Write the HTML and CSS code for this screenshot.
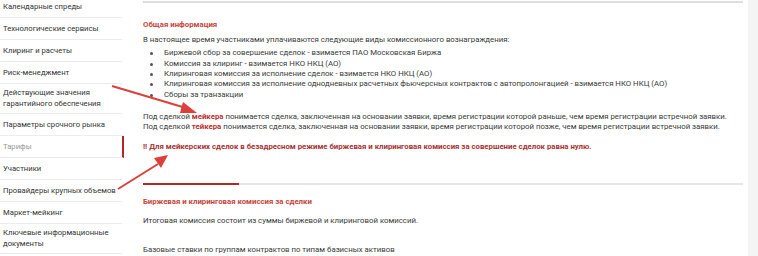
FILE: index.html
```html
<!DOCTYPE html>
<html lang="ru">

<head>
    <meta charset="UTF-8">
    <title>Тарифы</title>
    <link rel="stylesheet" href="styles.css">
</head>

<body>
    <div class="page">
        <!-- Боковое меню -->
        <ul class="side-menu">
            <li class="side-item">Календарные спреды</li>
            <li class="side-item">Технологические сервисы</li>
            <li class="side-item">Клиринг и расчеты</li>
            <li class="side-item">Риск-менеджмент</li>
            <li class="side-item two-line">Действующие значения гарантийного обеспечения</li>
            <li class="side-item">Параметры срочного рынка</li>
            <li class="side-item active">Тарифы</li>
            <li class="side-item">Участники</li>
            <li class="side-item">Провайдеры крупных объемов</li>
            <li class="side-item">Маркет-мейкинг</li>
            <li class="side-item two-line">Ключевые информационные документы</li>
        </ul>

        <!-- Основной текст -->
        <div class="content">
            <div class="top-line"></div>

            <h3 class="block-title">Общая информация</h3>
            <p class="text">В настоящее время участниками уплачиваются следующие виды комиссионного вознаграждения:</p>
            <ul class="fee-list">
                <li>Биржевой сбор за совершение сделок - взимается ПАО Московская Биржа</li>
                <li>Комиссия за клиринг - взимается НКО НКЦ (АО)</li>
                <li>Клиринговая комиссия за исполнение сделок - взимается НКО НКЦ (АО)</li>
                <li>Клиринговая комиссия за исполнение однодневных расчетных фьючерсных контрактов с автопролонгацией - взимается НКО НКЦ (АО)</li>
                <li>Сборы за транзакции</li>
            </ul>

            <p class="text terms">
                Под сделкой <b class="mark">мейкера</b> понимается сделка, заключенная на основании заявки, время регистрации которой раньше, чем время регистрации встречной заявки.<br>
                Под сделкой <b class="mark">тейкера</b> понимается сделка, заключенная на основании заявки, время регистрации которой позже, чем время регистрации встречной заявки.
            </p>

            <p class="warning">!! Для мейкерских сделок в безадресном режиме биржевая и клиринговая комиссия за совершение сделок равна нулю.</p>

            <div class="tabs-line">
                <div class="tab-active"></div>
            </div>

            <h3 class="block-title second">Биржевая и клиринговая комиссия за сделки</h3>
            <p class="text total">Итоговая комиссия состоит из суммы биржевой и клиринговой комиссий.</p>
            <p class="text base">Базовые ставки по группам контрактов по типам базисных активов</p>
        </div>

        <div class="scroll-strip"></div>
    </div>

    <!-- Стрелки поверх страницы -->
    <svg class="arrows" width="758" height="256" viewBox="0 0 758 256">
        <line x1="112" y1="86" x2="186" y2="108" stroke="#d9413a" stroke-width="2" />
        <polygon points="197,113 183,102 180,113" fill="#d9413a" />
        <line x1="118" y1="189" x2="158" y2="164" stroke="#d9413a" stroke-width="2" />
        <polygon points="168,155 154,158 161,168" fill="#d9413a" />
    </svg>
</body>

</html>
```

FILE: styles.css
```css
/* Общие стили */
* {
    box-sizing: border-box;
}

body {
    margin: 0;
    background-color: #fff;
    font-family: Roboto, "Liberation Sans", sans-serif;
    color: #333;
    position: relative;
    overflow: hidden;
}

.page {
    display: flex;
    height: 256px;
}

/* Боковое меню */
.side-menu {
    list-style: none;
    margin: 0;
    padding: 0;
    width: 124px;
    flex-shrink: 0;
    margin-top: -4px;
}

.side-item {
    font-size: 7.7px;
    line-height: 11px;
    padding: 5px 0 5px 3px;
    border-bottom: 1px solid #ececec;
    color: #333;
    width: 122px;
    white-space: nowrap;
}

.side-item.two-line {
    white-space: normal;
    padding: 3px 10px 4px 3px;
}

.side-item.active {
    color: #999;
    border-right: 2px solid #b3262e;
    width: 124px;
}

/* Основной блок */
.content {
    flex: 1;
    padding-left: 19px;
    padding-right: 5px;
}

.top-line {
    height: 2px;
    margin-top: 1px;
    background-color: #dedede;
}

.block-title {
    font-size: 7.8px;
    font-weight: bold;
    color: #c5463d;
    margin: 16px 0 0;
    line-height: 12px;
}

.block-title.second {
    margin-top: 11px;
}

.text {
    font-size: 7.8px;
    line-height: 10.4px;
    margin: 4px 0 0;
    color: #3a3a3a;
}

.fee-list {
    font-size: 7.8px;
    line-height: 10.3px;
    margin: 3px 0 0;
    padding-left: 21px;
    color: #3a3a3a;
}

.fee-list li {
    list-style: none;
    position: relative;
}

.fee-list li::before {
    content: "";
    position: absolute;
    left: -14px;
    top: 4px;
    width: 3px;
    height: 3px;
    border-radius: 50%;
    background-color: #555;
}

.terms {
    margin-top: 12px;
}

.mark {
    color: #b8302d;
}

.warning {
    font-size: 7.8px;
    font-weight: bold;
    color: #a83332;
    margin: 8px 0 0;
    line-height: 12px;
}

.tabs-line {
    margin-top: 30px;
    height: 2px;
    background-color: #e6e6e6;
}

.tab-active {
    width: 96px;
    height: 2px;
    background-color: #b3262e;
}

.total {
    margin-top: 8px;
}

.base {
    margin-top: 19px;
}

.scroll-strip {
    width: 10px;
    flex-shrink: 0;
    background-color: #f4f4f4;
}

/* Стрелки */
.arrows {
    position: absolute;
    left: 0;
    top: 0;
    pointer-events: none;
}
```
